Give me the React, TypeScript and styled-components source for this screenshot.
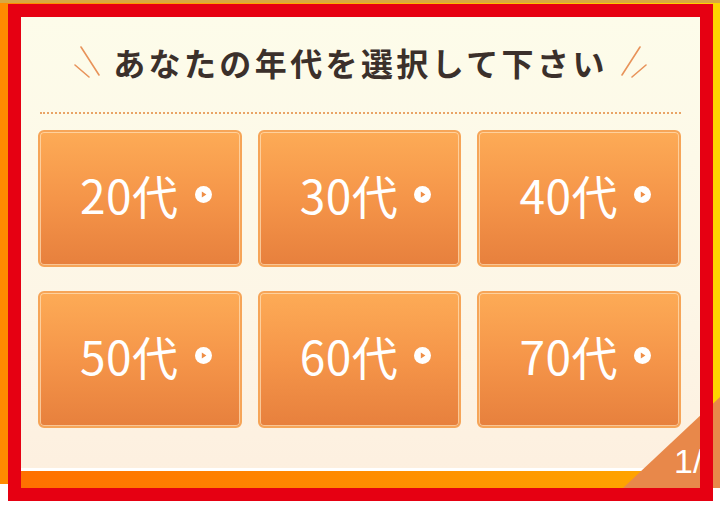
import styled, { createGlobalStyle } from "styled-components";

const GlobalStyle = createGlobalStyle`
  html, body {
    margin: 0;
    padding: 0;
    background: #ffffff;
  }
  * {
    box-sizing: border-box;
  }
`;

const Stage = styled.div`
  position: relative;
  height: 505px;
  padding: 17px 20px 0 21px;
  background:
    linear-gradient(180deg, #d8a942 0, #d8a942 3px, transparent 3px) no-repeat,
    linear-gradient(90deg, #ff8a00 0%, #ffb300 55%, #ffd400 100%) no-repeat;
  background-size: 100% 484px, 100% 484px;
`;

const Card = styled.div`
  position: relative;
  width: 679px;
  height: 471px;
  display: flex;
  flex-direction: column;
  background: linear-gradient(180deg, #fdfcea 0%, #fdf6e6 60%, #fdefdf 100%);
`;

const Header = styled.div`
  display: flex;
  align-items: center;
  justify-content: center;
  gap: 12px;
  height: 36px;
  margin-top: 27px;
`;

const Title = styled.h1`
  margin: 0;
  font-family: "Noto Sans CJK JP", "Noto Sans", sans-serif;
  font-size: 32px;
  font-weight: 700;
  letter-spacing: 3.4px;
  line-height: 36px;
  color: #3b302b;
  white-space: nowrap;
`;

const Spark = styled.svg`
  width: 28px;
  height: 32px;
  flex: none;
`;

const Divider = styled.div`
  margin: 32px 19px 0 19px;
  border-top: 2px dotted #e9a466;
`;

const Grid = styled.div`
  display: grid;
  grid-template-columns: repeat(3, 1fr);
  grid-auto-rows: 137px;
  column-gap: 16px;
  row-gap: 24px;
  margin-top: 16px;
  padding: 0 19px 0 17px;
`;

const AgeButton = styled.button`
  display: flex;
  align-items: center;
  justify-content: center;
  gap: 16px;
  padding: 0 0 10px 12px;
  border: 2px solid #f6a558;
  border-radius: 6px;
  background: linear-gradient(180deg, #fdab56 0%, #f59549 50%, #e7803d 100%);
  box-shadow: inset 0 0 0 1px rgba(255, 222, 180, 0.75);
  cursor: pointer;
`;

const AgeLabel = styled.span`
  font-family: "Noto Sans CJK JP", "Noto Sans", sans-serif;
  font-size: 46px;
  font-weight: 400;
  line-height: 1;
  color: #ffffff;
  letter-spacing: 0.5px;
`;

const PlayDot = styled.svg`
  width: 17px;
  height: 17px;
  flex: none;
  margin-top: 2px;
`;

const Spacer = styled.div`
  flex: 1;
`;

const WhiteLine = styled.div`
  height: 3px;
  background: #ffffff;
`;

const OrangeBar = styled.div`
  height: 17px;
  background: linear-gradient(90deg, #ff7000 0%, #ff8c00 50%, #ffa800 100%);
`;

const Corner = styled.div`
  position: absolute;
  right: -20px;
  bottom: 0;
  width: 97px;
  height: 91px;
  background: #e8884a;
  clip-path: polygon(0 100%, 100% 0, 100% 100%);
`;

const PageNo = styled.span`
  position: absolute;
  left: 653px;
  bottom: 10px;
  white-space: nowrap;
  font-family: "Liberation Sans", Arial, sans-serif;
  font-size: 34px;
  line-height: 1;
  color: #ffffff;
`;

const Highlight = styled.div`
  position: absolute;
  left: 8px;
  top: 4px;
  width: 705px;
  height: 497px;
  border: 13px solid #e60012;
  pointer-events: none;
`;

const ages = ["20代", "30代", "40代", "50代", "60代", "70代"];

function PlayIcon() {
  return (
    <PlayDot viewBox="0 0 17 17">
      <circle cx="8.5" cy="8.5" r="8.5" fill="#ffffff" />
      <polygon points="6.8,5.6 11.4,8.5 6.8,11.4" fill="#ef8d45" />
    </PlayDot>
  );
}

export default function App() {
  return (
    <>
      <GlobalStyle />
      <Stage>
        <Card>
          <Header>
            <Spark viewBox="0 0 28 32">
              <line x1="8" y1="1" x2="26" y2="29" stroke="#e8935a" strokeWidth="1.6" strokeLinecap="round" />
              <line x1="2" y1="19" x2="16" y2="31" stroke="#e8935a" strokeWidth="1.6" strokeLinecap="round" />
            </Spark>
            <Title>あなたの年代を選択して下さい</Title>
            <Spark viewBox="0 0 28 32">
              <line x1="20" y1="1" x2="2" y2="29" stroke="#e8935a" strokeWidth="1.6" strokeLinecap="round" />
              <line x1="26" y1="19" x2="12" y2="31" stroke="#e8935a" strokeWidth="1.6" strokeLinecap="round" />
            </Spark>
          </Header>
          <Divider />
          <Grid>
            {ages.map((age) => (
              <AgeButton key={age}>
                <AgeLabel>{age}</AgeLabel>
                <PlayIcon />
              </AgeButton>
            ))}
          </Grid>
          <Spacer />
          <WhiteLine />
          <OrangeBar />
          <Corner />
          <PageNo>1/</PageNo>
        </Card>
        <Highlight />
      </Stage>
    </>
  );
}
